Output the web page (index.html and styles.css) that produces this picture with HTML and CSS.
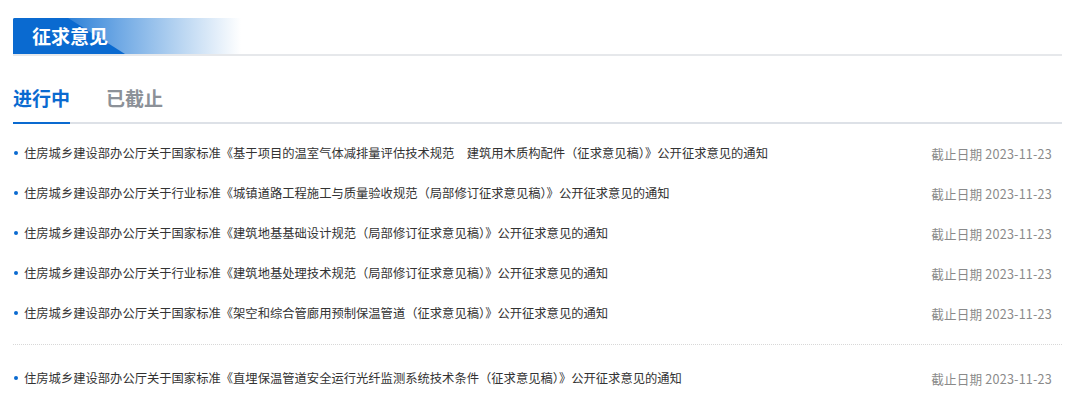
FILE: index.html
```html
<!DOCTYPE html>
<html lang="zh-CN">
<head>
    <meta charset="UTF-8">
    <meta name="viewport" content="width=device-width, initial-scale=1.0">
    <title>征求意见</title>
    <link rel="stylesheet" href="styles.css">
</head>
<body>
    <div class="container">
        <div class="section-head">
            <div class="section-title"><span>征求意见</span></div>
        </div>

        <div class="tabs">
            <div class="tab active">进行中</div>
            <div class="tab">已截止</div>
        </div>

        <ul class="notice-list">
            <li class="notice-item">
                <span class="notice-title">住房城乡建设部办公厅关于国家标准《基于项目的温室气体减排量评估技术规范　建筑用木质构配件（征求意见稿）》公开征求意见的通知</span>
                <span class="notice-date">截止日期 2023-11-23</span>
            </li>
            <li class="notice-item">
                <span class="notice-title">住房城乡建设部办公厅关于行业标准《城镇道路工程施工与质量验收规范（局部修订征求意见稿）》公开征求意见的通知</span>
                <span class="notice-date">截止日期 2023-11-23</span>
            </li>
            <li class="notice-item">
                <span class="notice-title">住房城乡建设部办公厅关于国家标准《建筑地基基础设计规范（局部修订征求意见稿）》公开征求意见的通知</span>
                <span class="notice-date">截止日期 2023-11-23</span>
            </li>
            <li class="notice-item">
                <span class="notice-title">住房城乡建设部办公厅关于行业标准《建筑地基处理技术规范（局部修订征求意见稿）》公开征求意见的通知</span>
                <span class="notice-date">截止日期 2023-11-23</span>
            </li>
            <li class="notice-item">
                <span class="notice-title">住房城乡建设部办公厅关于国家标准《架空和综合管廊用预制保温管道（征求意见稿）》公开征求意见的通知</span>
                <span class="notice-date">截止日期 2023-11-23</span>
            </li>
        </ul>

        <ul class="notice-list next">
            <li class="notice-item">
                <span class="notice-title">住房城乡建设部办公厅关于国家标准《直埋保温管道安全运行光纤监测系统技术条件（征求意见稿）》公开征求意见的通知</span>
                <span class="notice-date">截止日期 2023-11-23</span>
            </li>
        </ul>
    </div>
</body>
</html>
```

FILE: styles.css
```css
* { margin: 0; padding: 0; box-sizing: border-box; }
body { font-family: "Noto Sans CJK SC", "Noto Sans", sans-serif; background: #fff; color: #333; }
.container { width: 1062px; padding: 18px 0 0 13px; }

.section-head { border-bottom: 2px solid #e6e8eb; }
.section-title { position: relative; width: 228px; height: 36px; line-height: 36px; padding-left: 19px; font-size: 19px; font-weight: bold; color: #fff; border-radius: 2px 0 0 0; background: linear-gradient(90deg, #0a6ad0 0, #1a75d4 40px, #6ea8e4 105px, #bcd7f2 170px, #fff 228px); overflow: hidden; }
.section-title::before { content: ""; position: absolute; left: 0; top: 0; width: 112px; height: 100%; background: #0a6ad0; clip-path: polygon(0 0, 55px 0, 112px 100%, 0 100%); }
.section-title span { position: relative; }

.tabs { display: flex; gap: 36px; margin-top: 29px; border-bottom: 2px solid #dde1e7; }
.tab { font-size: 19px; line-height: 26px; font-weight: bold; color: #8c9198; padding-bottom: 11px; margin-bottom: -2px; border-bottom: 2px solid transparent; }
.tab.active { color: #0a6ad0; border-bottom-color: #0a6ad0; }

.notice-list { list-style: none; margin-top: 9px; padding-bottom: 11px; border-bottom: 1px dotted #d8d8d8; }
.notice-list.next { margin-top: 13px; border-bottom: none; }
.notice-item { display: flex; justify-content: space-between; align-items: center; height: 40px; padding: 0 10px 0 11px; font-size: 12.3px; position: relative; }
.notice-item::before { content: ""; position: absolute; left: 1px; top: 18px; width: 4px; height: 4px; border-radius: 50%; background: #0a6ad0; }
.notice-title { color: #333; white-space: nowrap; }
.notice-date { color: #8a8a8a; white-space: nowrap; font-size: 12.6px; letter-spacing: 0.2px; }
```
